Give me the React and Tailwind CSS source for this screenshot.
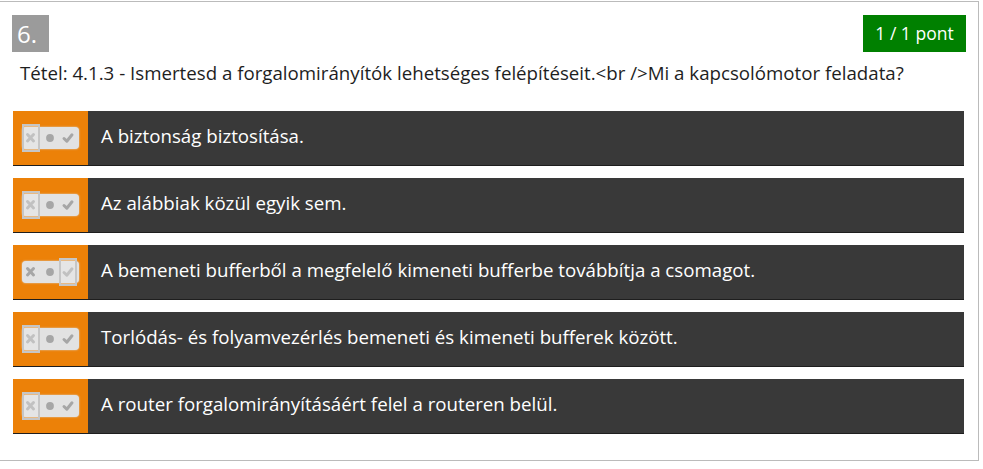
import React from "react";

const options = [
  { text: "A biztonság biztosítása.", sel: "x" },
  { text: "Az alábbiak közül egyik sem.", sel: "x" },
  { text: "A bemeneti bufferből a megfelelő kimeneti bufferbe továbbítja a csomagot.", sel: "v" },
  { text: "Torlódás- és folyamvezérlés bemeneti és kimeneti bufferek között.", sel: "x" },
  { text: "A router forgalomirányításáért felel a routeren belül.", sel: "x" },
];

function Toggle({ sel }) {
  return (
    <div className="relative w-[57px] h-[28px]">
      <div className="absolute left-0 top-[3px] w-[57px] h-[22px] rounded-[4px] bg-[#e2e2e2] shadow-[0_0_2px_#d8d8d8]" />
      <svg className="absolute left-0 top-0" width="57" height="28" viewBox="0 0 57 28">
        <g stroke="#a6a6a6" strokeWidth="3" strokeLinecap="round" fill="none">
          <path d="M5.5 10.5 L11.5 17 M11.5 10.5 L5.5 17" />
        </g>
        <circle cx="28" cy="14" r="3.9" fill="#a6a6a6" />
        <path d="M42 14.5 L44.8 17.2 L50 10.8" stroke="#a6a6a6" strokeWidth="3" strokeLinecap="round" strokeLinejoin="round" fill="none" />
      </svg>
      {sel === "x" ? (
        <div className="absolute left-0 top-0 w-[18px] h-[28px] border-2 border-[#c6c6c6] bg-[#ececec]/40" />
      ) : (
        <div className="absolute left-[37px] top-0 w-[18px] h-[28px] border-2 border-[#c6c6c6] bg-[#ececec]/40" />
      )}
    </div>
  );
}

export default function App() {
  return (
    <div className="w-[983px] h-[469px] bg-white pt-px" style={{ fontFamily: '"Open Sans", "Liberation Sans", sans-serif' }}>
      <div className="ml-[-1px] w-[980px] h-[460px] border border-[#bbbbbb] bg-white px-[12px] pt-[13px]">
        <div className="flex justify-between items-start">
          <div className="w-[37px] h-[37px] bg-[#9b9b9b] text-white text-[24px] leading-[37px] pl-[5px]">6.</div>
          <div className="w-[103px] h-[37px] bg-[#008000] text-white text-[17.5px] leading-[37px] text-center">1 / 1 pont</div>
        </div>
        <div className="mt-[7px] pl-[8px] text-[18.7px] leading-[27px] text-[#1e1e1e] whitespace-nowrap">
          Tétel: 4.1.3 - Ismertesd a forgalomirányítók lehetséges felépítéseit.&lt;br /&gt;Mi a kapcsolómotor feladata?
        </div>
        <div className="mt-[25px] ml-px w-[951px] flex flex-col gap-[12px]">
          {options.map((o, i) => (
            <div key={i} className="flex h-[55px] border-b border-[#1e1e1e]">
              <div className="w-[75px] bg-[#ec8108] flex items-start pl-[9px] pt-[13px]">
                <Toggle sel={o.sel} />
              </div>
              <div className="flex-1 bg-[#393939] text-white text-[18.7px] flex items-center pl-[13px] pb-[4px] whitespace-nowrap">{o.text}</div>
            </div>
          ))}
        </div>
      </div>
    </div>
  );
}
